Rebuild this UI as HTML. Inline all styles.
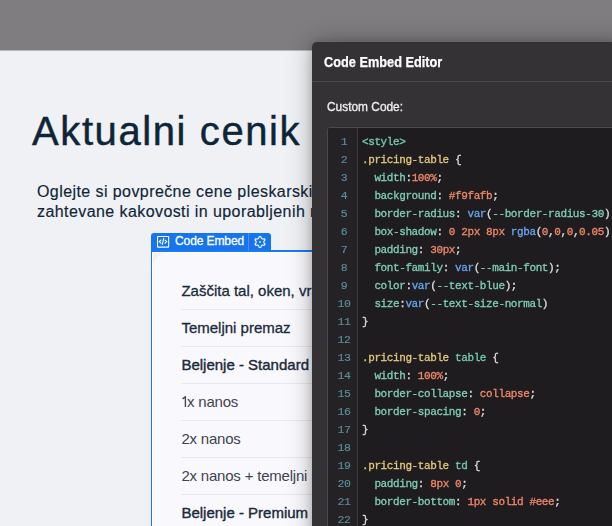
<!DOCTYPE html>
<html><head><meta charset="utf-8">
<style>
*{margin:0;padding:0;box-sizing:border-box}
html,body{width:612px;height:526px;overflow:hidden;background:#f0f1f4;font-family:"Liberation Sans",sans-serif;position:relative}
.topbar{position:absolute;left:0;top:0;width:612px;height:50px;background:#7f7d80}
h1{position:absolute;left:32px;top:106.5px;font-size:40px;font-weight:normal;color:#0e2538;white-space:nowrap;line-height:48px;letter-spacing:1.6px;-webkit-text-stroke:0.45px #0e2538}
.para{position:absolute;left:37px;top:182px;font-size:16px;line-height:20px;color:#0e2538;white-space:nowrap;letter-spacing:0.42px;-webkit-text-stroke:0.15px #0e2538}
.embed{position:absolute;left:151px;top:250px;width:500px;height:300px;border-left:1px solid #1674ee;border-top:2px solid #1a7af2}
.embed:after{content:"";position:absolute;left:0;top:0;right:0;bottom:0;border-left:1px solid #fff;border-top:1px solid #fff;z-index:2}
.tab{position:absolute;left:151px;top:233px;width:120px;height:17px;background:#1674ee;border-radius:3px 3px 0 0;color:#fff;font-size:13px}
.tabtxt{position:absolute;left:24px;top:0px;font-size:12px;line-height:16px;white-space:nowrap;-webkit-text-stroke:0.3px #fff;letter-spacing:-0.1px}
.card{position:absolute;left:153px;top:253px;width:460px;height:300px;background:#f9f9fd;border-top-left-radius:14px;box-shadow:0 2px 8px rgba(0,0,0,0.04)}
.row{position:absolute;left:181px;width:430px;height:37px;border-bottom:1px solid #e8e8ed;font-size:15px;line-height:20px;padding-top:8px;color:#1b2a3c;white-space:nowrap;padding-left:0.4px}
.m{-webkit-text-stroke:0.3px #1b2a3c}.sb{-webkit-text-stroke:0.4px #1b2a3c}.r{color:#3f4451;letter-spacing:-0.2px}
.modal{position:absolute;left:312px;top:42px;width:320px;height:520px;background:#343235;border-radius:5px 0 0 0;box-shadow:0 0 24px rgba(0,0,0,0.32),0 0 8px rgba(0,0,0,0.15);z-index:10;will-change:transform}
.mtitle{position:absolute;left:12px;top:11px;font-size:15px;font-weight:bold;color:#fff;white-space:nowrap;transform:scaleX(0.85);transform-origin:0 0;-webkit-text-stroke:0.25px #fff}
.mdiv{position:absolute;left:0;top:39px;width:320px;height:1px;background:#48474a}
.mlabel{position:absolute;left:15px;top:57px;font-size:13px;color:#ececec;white-space:nowrap;transform:scaleX(0.915);transform-origin:0 0;-webkit-text-stroke:0.35px #ececec}
.code{position:absolute;left:15px;top:85px;width:320px;height:420px;background:#1e1c1f;border:1px solid #4a494c;border-radius:3px 0 0 0;overflow:hidden}
.gutter{position:absolute;left:0;top:0;width:30px;height:100%;background:#242225;border-right:1px solid #3d3c3f}
.ln{position:absolute;left:0;top:5px;width:32px;text-align:center;font-family:"Liberation Mono",monospace;font-size:11.5px;line-height:18px;color:#5b8e9c;letter-spacing:-0.3px;-webkit-text-stroke:0.15px #5b8e9c}
.src{position:absolute;left:34px;top:5px;font-family:"Liberation Mono",monospace;font-size:11px;line-height:18px;color:#dedede;white-space:pre;letter-spacing:-0.4px;-webkit-text-stroke:0.3px currentColor}
.t{color:#76c8b2}.s{color:#e4c87e}.p{color:#80cdb6}.v{color:#f0896a}.f{color:#6aa5ee}.w{color:#dcdcdc}
</style></head><body>
<div class="topbar"></div><div style="position:absolute;left:0;top:50px;width:612px;height:1px;background:#b8b8bb"></div>
<h1>Aktualni cenik</h1>
<div class="para">Oglejte si povprečne cene pleskarskih storitev<br>zahtevane kakovosti in uporabljenih materialov</div>
<div style="position:absolute;left:152px;top:252px;width:460px;height:300px;background:#f3f3f7"></div><div class="card"></div>
<div class="embed"></div>
<div class="tab">
  <svg style="position:absolute;left:6px;top:3px" width="13" height="13" viewBox="0 0 13 13"><rect x="0.55" y="0.55" width="11.1" height="10.6" rx="0.5" fill="none" stroke="#fff" stroke-width="1.1"/><path d="M4 4 L2.2 5.6 L4 7.2 M8 4 L9.8 5.6 L8 7.2" fill="none" stroke="#fff" stroke-width="1.1" stroke-linecap="round" stroke-linejoin="round"/><path d="M6.7 2.4 L5.3 8.5" fill="none" stroke="#fff" stroke-width="1.1" stroke-linecap="round"/></svg>
  <span class="tabtxt">Code Embed</span>
  <div style="position:absolute;left:97px;top:0;width:1px;height:18px;background:#4d8ff0"></div>
  <svg style="position:absolute;left:102px;top:2px" width="14" height="14" viewBox="0 0 14 14"><path d="M5.56 3.37 L6.31 1.54 L7.69 1.54 L8.44 3.37 L9.42 3.94 L11.38 3.67 L12.07 4.87 L10.86 6.43 L10.86 7.57 L12.07 9.13 L11.38 10.33 L9.42 10.06 L8.44 10.63 L7.69 12.46 L6.31 12.46 L5.56 10.63 L4.58 10.06 L2.62 10.33 L1.93 9.13 L3.14 7.57 L3.14 6.43 L1.93 4.87 L2.62 3.67 L4.58 3.94 Z" stroke-linejoin="round" fill="none" stroke="#fff" stroke-width="1.1"/><rect x="6" y="6.4" width="2" height="1.2" fill="#fff"/></svg>
</div>
<div class="row m" style="top:273px">Zaščita tal, oken, vrat</div>
<div class="row m" style="top:310px">Temeljni premaz</div>
<div class="row sb" style="top:347px">Beljenje - Standard</div>
<div class="row r" style="top:384px"><svg width="6" height="11" viewBox="0 0 6 11" style="vertical-align:0;margin-left:0.5px;margin-right:-0.9px"><path d="M3.4 0.2 L3.4 11 M3.6 0.5 L0.6 2.9" fill="none" stroke="#3f4451" stroke-width="1.35"/></svg>x nanos</div>
<div class="row r" style="top:421px">2x nanos</div>
<div class="row r" style="top:458px">2x nanos + temeljni premaz</div>
<div class="row sb" style="top:495px">Beljenje - Premium</div>
<div class="modal">
  <div class="mtitle">Code Embed Editor</div>
  <div class="mdiv"></div>
  <div class="mlabel">Custom Code:</div>
  <div class="code">
    <div class="gutter"><div class="ln">1<br>2<br>3<br>4<br>5<br>6<br>7<br>8<br>9<br>10<br>11<br>12<br>13<br>14<br>15<br>16<br>17<br>18<br>19<br>20<br>21<br>22</div></div>
    <div class="src"><span class="t">&lt;style&gt;</span>
<span class="s">.pricing-table</span> {
  <span class="p">width</span>:<span class="v">100%</span>;
  <span class="p">background</span>: <span class="v">#f9fafb</span>;
  <span class="p">border-radius</span>: <span class="f">var</span>(<span class="p">--border-radius-30</span>);
  <span class="p">box-shadow</span>: <span class="v">0 2px 8px</span> <span class="f">rgba</span>(<span class="v">0</span>,<span class="v">0</span>,<span class="v">0</span>,<span class="v">0.05</span>);
  <span class="p">padding</span>: <span class="v">30px</span>;
  <span class="p">font-family</span>: <span class="f">var</span>(<span class="p">--main-font</span>);
  <span class="p">color</span>:<span class="f">var</span>(<span class="p">--text-blue</span>);
  <span class="p">size</span>:<span class="f">var</span>(<span class="p">--text-size-normal</span>)
}

<span class="s">.pricing-table</span> <span class="t">table</span> {
  <span class="p">width</span>: <span class="v">100%</span>;
  <span class="p">border-collapse</span>: <span class="v">collapse</span>;
  <span class="p">border-spacing</span>: <span class="v">0</span>;
}

<span class="s">.pricing-table</span> <span class="t">td</span> {
  <span class="p">padding</span>: <span class="v">8px 0</span>;
  <span class="p">border-bottom</span>: <span class="v">1px solid #eee</span>;
}</div>
  </div>
</div>
</body></html>
